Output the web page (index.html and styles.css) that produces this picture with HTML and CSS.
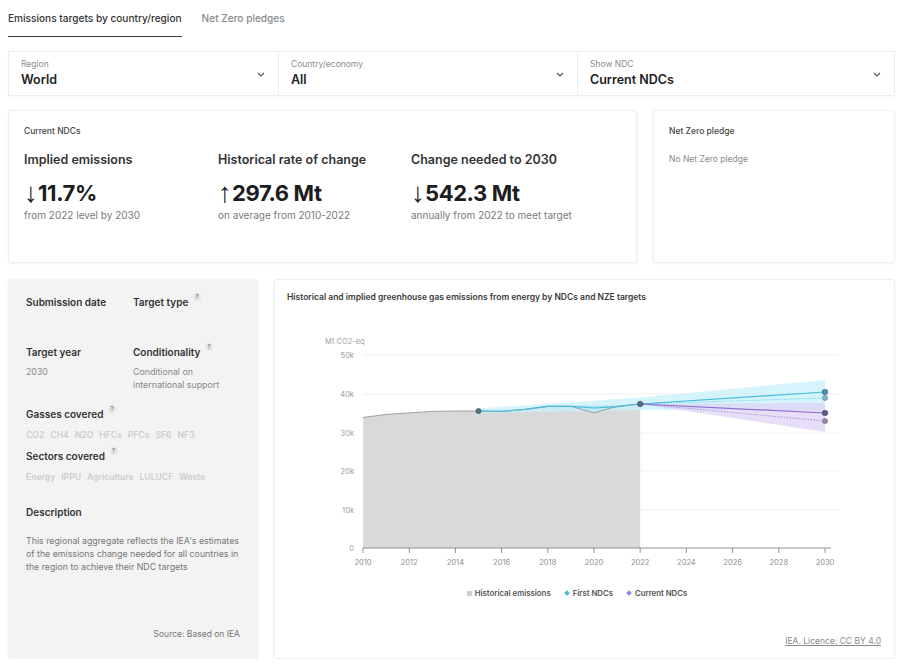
FILE: index.html
```html
<!DOCTYPE html>
<html lang="en">
<head>
<meta charset="utf-8">
<title>Emissions targets</title>
<link rel="stylesheet" href="styles.css">
</head>
<body>
<div class="page">
  <nav class="tabs">
    <a class="tab active">Emissions targets by country/region</a>
    <a class="tab">Net Zero pledges</a>
  </nav>

  <div class="filters">
    <div class="filter">
      <div class="f-text"><div class="f-label">Region</div><div class="f-value">World</div></div>
      <svg class="chev" width="8" height="5" viewBox="0 0 8 5"><path d="M1 1l3 3 3-3" /></svg>
    </div>
    <div class="filter">
      <div class="f-text"><div class="f-label">Country/economy</div><div class="f-value">All</div></div>
      <svg class="chev" width="8" height="5" viewBox="0 0 8 5"><path d="M1 1l3 3 3-3" /></svg>
    </div>
    <div class="filter">
      <div class="f-text"><div class="f-label">Show NDC</div><div class="f-value">Current NDCs</div></div>
      <svg class="chev" width="8" height="5" viewBox="0 0 8 5"><path d="M1 1l3 3 3-3" /></svg>
    </div>
  </div>

  <div class="stats">
    <section class="card ndc">
      <div class="card-label">Current NDCs</div>
      <div class="stat-grid">
        <div class="stat">
          <div class="stat-head">Implied emissions</div>
          <div class="stat-num"><span class="arr">↓</span>11.7%</div>
          <div class="stat-sub">from 2022 level by 2030</div>
        </div>
        <div class="stat">
          <div class="stat-head">Historical rate of change</div>
          <div class="stat-num"><span class="arr">↑</span>297.6 Mt</div>
          <div class="stat-sub">on average from 2010-2022</div>
        </div>
        <div class="stat">
          <div class="stat-head">Change needed to 2030</div>
          <div class="stat-num"><span class="arr">↓</span>542.3 Mt</div>
          <div class="stat-sub">annually from 2022 to meet target</div>
        </div>
      </div>
    </section>
    <section class="card nz">
      <div class="card-label">Net Zero pledge</div>
      <div class="nz-text">No Net Zero pledge</div>
    </section>
  </div>

  <div class="lower">
    <aside class="details">
      <div class="d-grid">
        <div class="d-cell r1"><div class="d-head">Submission date</div></div>
        <div class="d-cell r1"><div class="d-head">Target type <span class="q">?</span></div></div>
        <div class="d-cell"><div class="d-head">Target year</div><div class="d-val">2030</div></div>
        <div class="d-cell"><div class="d-head">Conditionality <span class="q">?</span></div><div class="d-val">Conditional on<br>international support</div></div>
      </div>
      <div class="d-head gas">Gasses covered <span class="q">?</span></div>
      <div class="chips"><span>CO2</span><span>CH4</span><span>N2O</span><span>HFCs</span><span>PFCs</span><span>SF6</span><span>NF3</span></div>
      <div class="d-head sec">Sectors covered <span class="q">?</span></div>
      <div class="chips"><span>Energy</span><span>IPPU</span><span>Agriculture</span><span>LULUCF</span><span>Waste</span></div>
      <div class="d-head desc-h">Description</div>
      <p class="desc">This regional aggregate reflects the IEA's estimates of the emissions change needed for all countries in the region to achieve their NDC targets</p>
      <div class="source">Source: Based on IEA</div>
    </aside>

    <section class="card chart-card">
      <div class="chart-title">Historical and implied greenhouse gas emissions from energy by NDCs and NZE targets</div>
      <svg class="chart" width="594" height="282" viewBox="287 303 594 282">
        <g class="grid">
          <line x1="363" y1="355" x2="838" y2="355"/>
          <line x1="363" y1="394" x2="838" y2="394"/>
          <line x1="363" y1="433" x2="838" y2="433"/>
          <line x1="363" y1="471" x2="838" y2="471"/>
          <line x1="363" y1="510" x2="838" y2="510"/>
        </g>
        <text class="unit" x="325" y="344">Mt CO2-eq</text>
        <g class="ylab">
          <text x="354" y="358">50k</text>
          <text x="354" y="397">40k</text>
          <text x="354" y="436">30k</text>
          <text x="354" y="474">20k</text>
          <text x="354" y="513">10k</text>
          <text x="354" y="551">0</text>
        </g>
        <path class="hist" d="M363 548 L363 417.5 L386.1 414.4 L409.2 412.9 L432.3 411.4 L455.4 411 L478.5 411 L501.6 411.4 L524.7 409.4 L547.8 406.3 L570.9 406.3 L594 412.9 L617.1 406.3 L640.2 404 L640.2 548 Z"/>
        <path class="cyan-band" d="M478.5 408.5 L640.2 397.5 L825 380 L825 410 L640.2 410 L478.5 413 Z"/>
        <path class="purple-band" d="M640.2 404 L825 403 L825 432 Z"/>
        <path class="cyan-fill" d="M570.9 406.3 L594 412.9 L617.1 406.3 Z"/>
        <path class="hist-line" d="M363 417.5 L386.1 414.4 L409.2 412.9 L432.3 411.4 L455.4 411 L478.5 411 L501.6 411.4 L524.7 409.4 L547.8 406.3 L570.9 406.3 L594 412.9 L617.1 406.3 L640.2 404"/>
        <path class="cyan-dot" d="M570.9 406.3 L617.1 406 M640.2 404 L825 398"/>
        <path class="cyan-line" d="M478.5 411 L501.6 411.4 L524.7 409.4 L547.8 406.3 L570.9 406.3 L594 408 L617.1 406.6 L640.2 404 L825 392"/>
        <path class="purple-dot" d="M640.2 404 L825 421"/>
        <path class="purple-line" d="M640.2 404 L825 413"/>
        <g class="axis">
          <line x1="363" y1="548" x2="831" y2="548"/>
          <line x1="363" y1="548" x2="363" y2="553"/>
          <line x1="409.2" y1="548" x2="409.2" y2="553"/>
          <line x1="455.4" y1="548" x2="455.4" y2="553"/>
          <line x1="501.6" y1="548" x2="501.6" y2="553"/>
          <line x1="547.8" y1="548" x2="547.8" y2="553"/>
          <line x1="594" y1="548" x2="594" y2="553"/>
          <line x1="640.2" y1="548" x2="640.2" y2="553"/>
          <line x1="686.4" y1="548" x2="686.4" y2="553"/>
          <line x1="732.6" y1="548" x2="732.6" y2="553"/>
          <line x1="778.8" y1="548" x2="778.8" y2="553"/>
          <line x1="825" y1="548" x2="825" y2="553"/>
        </g>
        <g class="xlab">
          <text x="363" y="565">2010</text>
          <text x="409.2" y="565">2012</text>
          <text x="455.4" y="565">2014</text>
          <text x="501.6" y="565">2016</text>
          <text x="547.8" y="565">2018</text>
          <text x="594" y="565">2020</text>
          <text x="640.2" y="565">2022</text>
          <text x="686.4" y="565">2024</text>
          <text x="732.6" y="565">2026</text>
          <text x="778.8" y="565">2028</text>
          <text x="825" y="565">2030</text>
        </g>
        <circle class="pt-dark" cx="478.5" cy="411" r="2.6"/>
        <circle class="pt-dark" cx="640.2" cy="404" r="2.8"/>
        <circle class="pt-cyan" cx="825" cy="392" r="2.8"/>
        <circle class="pt-cyan2" cx="825" cy="398" r="2.6"/>
        <circle class="pt-pur" cx="825" cy="413" r="2.8"/>
        <circle class="pt-pur2" cx="825" cy="421" r="2.6"/>
      </svg>
      <div class="legend">
        <span class="lg"><i class="sq"></i>Historical emissions</span>
        <span class="lg"><i class="dm cy"></i>First NDCs</span>
        <span class="lg"><i class="dm pu"></i>Current NDCs</span>
      </div>
      <div class="licence"><a>IEA. Licence: CC BY 4.0</a></div>
    </section>
  </div>
</div>
</body>
</html>
```

FILE: styles.css
```css
* { box-sizing: border-box; }
html, body { margin: 0; padding: 0; background: #fff; }
body { font-family: Inter, "Noto Sans", "Liberation Sans", sans-serif; color: #2b2b2b; }

.page { padding: 10px 6px 0 8px; width: 901px; }

/* tabs */
.tabs { display: flex; }
.tab { font-size: 10.1px; line-height: 16px; padding-bottom: 10px; margin-right: 20px; color: #8a8a8a; font-weight: 500; border-bottom: 1px solid transparent; }
.tab.active { color: #333; border-bottom-color: #3c3c3c; }

/* filters */
.filters { margin-top: 14px; display: grid; grid-template-columns: 269px 299px 1fr; border: 1px solid #ededed; box-shadow: 0 1px 2px rgba(0,0,0,0.03); }
.filter { display: flex; align-items: center; padding: 7px 13px 7px 12px; border-left: 1px solid #ededed; }
.filter:first-child { border-left: none; }
.f-text { flex: 1; }
.f-label { font-size: 8.5px; line-height: 10px; color: #8c8c8c; }
.f-value { margin-top: 3px; font-size: 12.5px; line-height: 16px; font-weight: 600; color: #222; }
.chev { margin-top: 1px; }
.chev path { fill: none; stroke: #555; stroke-width: 1.2; }

/* cards */
.card { background: #fff; border: 1px solid #eeeeee; border-radius: 3px; box-shadow: 0 1px 3px rgba(0,0,0,0.05); }
.stats { margin-top: 14px; display: grid; grid-template-columns: 629px 1fr; gap: 16px; height: 153px; }
.ndc, .nz { padding: 15px; }
.card-label { font-size: 8.5px; line-height: 10px; color: #444; font-weight: 500; }
.stat-grid { display: grid; grid-template-columns: 194px 193px 1fr; margin-top: 16px; }
.stat-head { font-size: 12.5px; line-height: 16px; font-weight: 600; color: #333; }
.stat-num { margin-top: 11px; font-size: 22px; line-height: 28px; height: 28px; font-weight: 700; color: #1d1d1d; letter-spacing: -0.4px; white-space: nowrap; }
.arr { font-family: "Liberation Sans", "DejaVu Sans", sans-serif; font-weight: 400; font-size: 28px; line-height: 0; letter-spacing: 0; margin-right: 0; position: relative; top: 1px; }
.stat-sub { margin-top: 2px; font-size: 10px; line-height: 12px; color: #7a7a7a; }
.nz-text { margin-top: 18px; font-size: 8.5px; line-height: 10px; color: #8a8a8a; }

/* lower */
.lower { margin-top: 16px; display: grid; grid-template-columns: 250px 1fr; gap: 16px; height: 380px; }

.details { background: #f3f3f3; border-radius: 4px; box-shadow: 0 1px 3px rgba(0,0,0,0.06); padding: 16px 18px 19px 18px; display: flex; flex-direction: column; }
.d-grid { display: grid; grid-template-columns: 107px 1fr; }
.d-cell.r1 { height: 50px; }
.d-head { font-size: 10px; line-height: 14px; font-weight: 600; color: #333; }
.q { display: inline-block; vertical-align: top; margin-top: -2px; margin-left: 2px; width: 8px; height: 8px; border-radius: 50%; background: #e6e6e6; color: #777; font-size: 5.5px; line-height: 8px; text-align: center; font-weight: 600; }
.d-val { margin-top: 6px; font-size: 8.8px; line-height: 13px; color: #888; }
.gas { margin-top: 16px; }
.sec { margin-top: 8px; }
.chips { margin-top: 8px; display: flex; gap: 6px; font-size: 8.6px; line-height: 12px; font-weight: 600; color: #cdcdcd; }
.desc-h { margin-top: 22px; }
.desc { margin: 15px 0 0; font-size: 8.8px; line-height: 13px; color: #777; }
.source { margin-top: auto; text-align: right; font-size: 8.5px; line-height: 12px; color: #777; }

.chart-card { padding: 11px 13px 11px 12px; display: flex; flex-direction: column; }
.chart-title { font-size: 8.5px; line-height: 12px; font-weight: 600; color: #3a3a3a; }
.chart { display: block; }
.grid line { stroke: #efefef; stroke-width: 1; }
.unit { font-size: 7.5px; fill: #a0a0a0; font-family: Inter, sans-serif; }
.ylab text { font-size: 7.5px; fill: #a0a0a0; text-anchor: end; font-family: Inter, sans-serif; }
.xlab text { font-size: 7.5px; fill: #909090; text-anchor: middle; font-family: Inter, sans-serif; }
.axis line { stroke: #777; stroke-width: 0.8; }
.hist { fill: #d9d9d9; }
.hist-line { fill: none; stroke: #8c8c8c; stroke-width: 0.8; }
.cyan-band { fill: #c7f0fa; opacity: 0.75; }
.purple-band { fill: #ddd2f3; opacity: 0.7; }
.cyan-fill { fill: #bfeaf5; }
.cyan-line { fill: none; stroke: #48bcdc; stroke-width: 1.2; }
.cyan-dot { fill: none; stroke: #7ccfe5; stroke-width: 1; stroke-dasharray: 1.5 1.5; }
.purple-line { fill: none; stroke: #8c6fd4; stroke-width: 1.2; }
.purple-dot { fill: none; stroke: #ab96d9; stroke-width: 1; stroke-dasharray: 1.5 1.5; }
.pt-dark { fill: #5a7080; stroke: #3d4f5c; stroke-width: 0.6; }
.pt-cyan { fill: #4a93b0; stroke: #2c6580; stroke-width: 0.6; }
.pt-cyan2 { fill: #7eb3c4; stroke: #5a93a6; stroke-width: 0.6; }
.pt-pur { fill: #5f5890; stroke: #463f73; stroke-width: 0.6; }
.pt-pur2 { fill: #938aa8; stroke: #776e8e; stroke-width: 0.6; }

.legend { margin-top: 2px; display: flex; justify-content: center; gap: 14px; padding-right: 14px; font-size: 7.8px; line-height: 12px; font-weight: 600; color: #555; }
.lg { display: flex; align-items: center; }
.sq { display: inline-block; width: 5px; height: 5px; background: #cfcfcf; margin-right: 3px; }
.dm { display: inline-block; width: 4px; height: 4px; transform: rotate(45deg); margin-right: 4px; }
.dm.cy { background: #48bcdc; }
.dm.pu { background: #9a80d8; }

.licence { margin-top: auto; text-align: right; font-size: 8.5px; line-height: 12px; }
.licence a { color: #8a8a8a; text-decoration: underline; }
```
